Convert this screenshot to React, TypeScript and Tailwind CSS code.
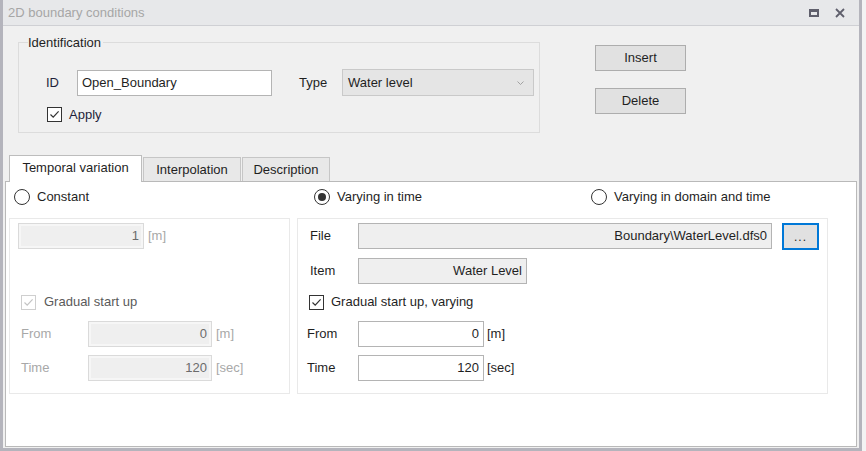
import { useState } from "react";

const FONT = { fontFamily: '"Liberation Sans", Arial, sans-serif' };

function CheckBox({ checked, disabled }: { checked: boolean; disabled?: boolean }) {
  const c = disabled ? "#c4c4c4" : "#333333";
  return (
    <div
      className={`w-[15px] h-[15px] border bg-white flex items-center justify-center ${
        disabled ? "border-[#cfcfcf]" : "border-[#333333]"
      }`}
    >
      {checked && (
        <svg width="11" height="11" viewBox="0 0 11 11">
          <path d="M1.5 5.5 L4.2 8.2 L9.6 2.4" fill="none" stroke={c} strokeWidth="1.2" />
        </svg>
      )}
    </div>
  );
}

function Radio({ selected }: { selected?: boolean }) {
  return (
    <div className="w-[16px] h-[16px] rounded-full border border-[#333333] bg-white flex items-center justify-center">
      {selected && <div className="w-[8px] h-[8px] rounded-full bg-[#333333]" />}
    </div>
  );
}

function NumBox({
  value,
  w,
  disabled,
}: {
  value: string;
  w: string;
  disabled?: boolean;
}) {
  return (
    <div
      className={`${w} h-[26px] border flex items-center justify-end pr-[4px] ${
        disabled
          ? "border-[#dadada] bg-[#efefef] text-[#6b6b6b] shadow-[inset_0_0_0_2px_#f6f6f6]"
          : "border-[#b4b4b4] bg-white text-[#1f1f1f]"
      }`}
    >
      {value}
    </div>
  );
}

export default function App() {
  const [tab, setTab] = useState("temporal");
  const tabs = [
    { id: "temporal", label: "Temporal variation", w: "w-[133px]" },
    { id: "interp", label: "Interpolation", w: "w-[98px]" },
    { id: "desc", label: "Description", w: "w-[88px]" },
  ];

  return (
    <div className="w-[866px] h-[451px] bg-[#f3f3f3] text-[13px] text-[#1f1f1f]" style={FONT}>
      <div className="w-[862px] h-[451px] bg-[#f0f0f0] border-l-[3px] border-r-[3px] border-b-[3px] border-[#b4b4bc] flex flex-col">
        {/* Title bar */}
        <div className="h-[26px] shrink-0 bg-[#e7e8ea] border-b border-[#cfd0d4] flex items-center pl-[5px] pr-[14px]">
          <span className="text-[#a6a6a6] text-[13px]">2D boundary conditions</span>
          <div className="ml-auto flex items-center gap-[16px]">
            <div className="w-[10px] h-[8px] border-[2px] border-[#5f5f6c] border-t-[3px]" />
            <svg width="10" height="10" viewBox="0 0 10 10">
              <path d="M1 1 L9 9 M9 1 L1 9" stroke="#5f5f6c" strokeWidth="1.8" />
            </svg>
          </div>
        </div>

        {/* Top section */}
        <div className="flex h-[129px] shrink-0">
          {/* Identification group */}
          <div className="ml-[15px] mt-[16px] w-[522px] h-[91px] border border-[#dcdcdc] relative">
            <span className="absolute left-[9px] top-[-8px] bg-[#f0f0f0] pr-[2px] leading-[16px]">
              Identification
            </span>
            <div className="flex items-center mt-[26px]">
              <span className="ml-[27px] w-[31px] text-[#1f1f3a]">ID</span>
              <div className="w-[195px] h-[26px] border border-[#b4b4b4] bg-white flex items-center pl-[4px]">
                Open_Boundary
              </div>
              <span className="ml-[27px] w-[43px]">Type</span>
              <div className="w-[192px] h-[27px] border border-[#c9c9c9] bg-[#e5e5e5] flex items-center pl-[5px] pr-[9px]">
                Water level
                <svg className="ml-auto" width="7" height="4" viewBox="0 0 7 4">
                  <path d="M0.5 0.5 L3.5 3.5 L6.5 0.5" fill="none" stroke="#9a9a9a" strokeWidth="0.9" />
                </svg>
              </div>
            </div>
            <div className="flex items-center mt-[9px] ml-[28px] gap-[7px]">
              <CheckBox checked />
              <span className="text-[#1f1f3a]">Apply</span>
            </div>
          </div>

          {/* Buttons */}
          <div className="ml-[55px] mt-[19px] flex flex-col gap-[17px]">
            <div className="w-[91px] h-[26px] bg-[#e1e1e1] border border-[#adadad] flex items-center justify-center">
              Insert
            </div>
            <div className="w-[91px] h-[26px] bg-[#e1e1e1] border border-[#adadad] flex items-center justify-center">
              Delete
            </div>
          </div>
        </div>

        {/* Tabs */}
        <div className="flex items-end h-[26px] pl-[6px] shrink-0 relative z-10">
          {tabs.map((t) => {
            const active = t.id === tab;
            return (
              <div
                key={t.id}
                onClick={() => setTab(t.id)}
                className={`${t.w} flex items-center justify-center border border-b-0 cursor-default ${
                  active
                    ? "h-[27px] bg-white border-[#bdbdbd] mb-[-1px] pb-[2px]"
                    : "h-[24px] bg-[#e8e8e8] border-[#c6c6c6] ml-[1px]"
                }`}
              >
                {t.label}
              </div>
            );
          })}
        </div>

        {/* Tab panel */}
        <div className="ml-[2px] w-[852px] h-[266px] bg-white border border-[#b9b9b9] flex flex-col">
          {/* Radios */}
          <div className="flex items-center h-[30px] shrink-0">
            <div className="flex items-center gap-[7px] ml-[8px] w-[300px]">
              <Radio />
              <span>Constant</span>
            </div>
            <div className="flex items-center gap-[7px] w-[277px]">
              <Radio selected />
              <span>Varying in time</span>
            </div>
            <div className="flex items-center gap-[7px]">
              <Radio />
              <span>Varying in domain and time</span>
            </div>
          </div>

          <div className="flex gap-[7px] ml-[3px] mt-[6px]">
            {/* Left subpanel (disabled) */}
            <div className="w-[281px] h-[176px] border border-[#e9e9e9] flex flex-col pl-[8px] pt-[4px]">
              <div className="flex items-center h-[26px]">
                <NumBox value="1" w="w-[126px]" disabled />
                <span className="ml-[4px] text-[#a8a8a8]">[m]</span>
              </div>
              <div className="flex items-center gap-[8px] mt-[45px] ml-[3px] h-[16px]">
                <CheckBox checked disabled />
                <span className="text-[#5a5a5a]">Gradual start up</span>
              </div>
              <div className="flex items-center h-[26px] mt-[11px]">
                <span className="w-[67px] ml-[3px] text-[#a8a8a8]">From</span>
                <NumBox value="0" w="w-[124px]" disabled />
                <span className="ml-[4px] text-[#a8a8a8]">[m]</span>
              </div>
              <div className="flex items-center h-[26px] mt-[8px]">
                <span className="w-[67px] ml-[3px] text-[#a8a8a8]">Time</span>
                <NumBox value="120" w="w-[124px]" disabled />
                <span className="ml-[4px] text-[#a8a8a8]">[sec]</span>
              </div>
            </div>

            {/* Right subpanel */}
            <div className="w-[531px] h-[176px] border border-[#e9e9e9] flex flex-col pt-[4px]">
              <div className="flex items-center h-[26px]">
                <span className="ml-[12px] w-[48px]">File</span>
                <div className="w-[414px] h-[26px] border border-[#b4b4b4] bg-[#efefef] flex items-center justify-end pr-[4px]">
                  Boundary\WaterLevel.dfs0
                </div>
                <div className="ml-[10px] w-[37px] h-[27px] bg-[#e1e1e1] border-2 border-[#0078d7] flex items-end justify-center pb-[5px] text-[12px] leading-none tracking-[1px]">
                  ...
                </div>
              </div>
              <div className="flex items-center h-[26px] mt-[9px]">
                <span className="ml-[12px] w-[48px]">Item</span>
                <div className="w-[169px] h-[26px] border border-[#b4b4b4] bg-[#efefef] flex items-center justify-end pr-[4px]">
                  Water Level
                </div>
              </div>
              <div className="flex items-center gap-[7px] mt-[10px] ml-[11px] h-[16px]">
                <CheckBox checked />
                <span>Gradual start up, varying</span>
              </div>
              <div className="flex items-center h-[26px] mt-[11px]">
                <span className="ml-[9px] w-[51px]">From</span>
                <NumBox value="0" w="w-[126px]" />
                <span className="ml-[3px]">[m]</span>
              </div>
              <div className="flex items-center h-[26px] mt-[8px]">
                <span className="ml-[9px] w-[51px]">Time</span>
                <NumBox value="120" w="w-[126px]" />
                <span className="ml-[3px]">[sec]</span>
              </div>
            </div>
          </div>
        </div>
      </div>
    </div>
  );
}
